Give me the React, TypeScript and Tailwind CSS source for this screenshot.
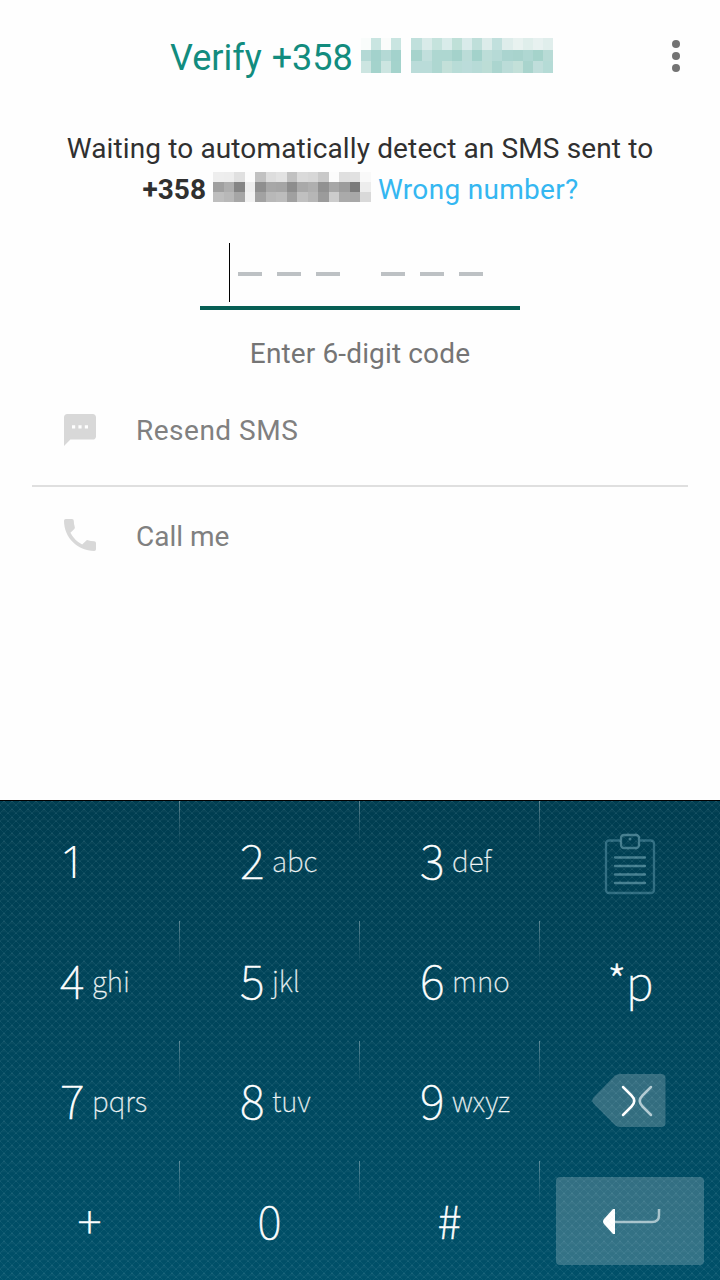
import type { ReactNode } from "react";

const titleMask = [
  ["#f9fcfb", "#c9e5e1", "#fafcfb", "#c9e5e1", "", "#c0e0dc", "#d9ebe9", "#c5e3dd", "#d9ecea", "#bfe0d8", "#d9ebea", "#bfdfda", "#dcecea", "#c1e0dd", "#deedeb", "#e8f2f0", "#dfeeeb", "#e7f1f0", "#e0eeec"],
  ["#b4d9d5", "#a3d2cc", "#b4d9d5", "#a3d2cc", "", "#a6d3cc", "#c1dfdc", "#aed7d1", "#aed7d1", "#a4d2cb", "#bbdcd8", "#a3d2cb", "#bcddd8", "#b6dad6", "#aad4cf", "#a8d3cd", "#afd7d2", "#a5d3cb", "#b8dbd6"],
  ["#cce5e1", "#a4d3cc", "#cce5e1", "#a4d3cc", "", "#badcd9", "#badcd9", "#aed7d1", "#c3e0d9", "#b8dcd7", "#bbdcda", "#b7dbd7", "#bcddd6", "#abd5cf", "#bbdcd8", "#c3e0d9", "#a9d4cd", "#c0dedb", "#b5dbd6"],
];

const phoneMask = [
  ["#eeeeee", "#ededed", "#e0e0e0", "#fcfcfc", "#c1c1c1", "#dddddd", "#e2e2e2", "#c1c1c1", "#dadada", "#d7d7d7", "#c9c9c9", "#fcfcfc", "#dfdfdf", "#e1e1e1", "#f9f9f9"],
  ["#a0a0a0", "#aeaeae", "#858585", "#eeeeee", "#8f8f8f", "#a7a7a7", "#a5a5a5", "#8d8d8d", "#a9a9a9", "#afafaf", "#919191", "#a7a7a7", "#9c9c9c", "#7b7b7b", "#ededed"],
  ["#bebebe", "#b8b8b8", "#a6a6a6", "#f2f2f2", "#a2a2a2", "#b8b8b8", "#bcbcbc", "#a0a0a0", "#c0c0c0", "#b6b6b6", "#9b9b9b", "#cccccc", "#aaaaaa", "#a8a8a8", "#d9d9d9"],
];

const keys = [
  ["1", ""],
  ["2", "abc"],
  ["3", "def"],
  ["clipboard", ""],
  ["4", "ghi"],
  ["5", "jkl"],
  ["6", "mno"],
  ["star", ""],
  ["7", "pqrs"],
  ["8", "tuv"],
  ["9", "wxyz"],
  ["backspace", ""],
  ["+", ""],
  ["0", ""],
  ["#", ""],
  ["enter", ""],
];

function Mask({ rows, className, gapWidth }: { rows: string[][]; className: string; gapWidth?: string }) {
  return (
    <div className={`flex shrink-0 flex-col ${className}`}>
      {rows.map((row, i) => (
        <div key={i} className="flex flex-1">
          {row.map((color, j) =>
            color ? (
              <span key={j} className="flex-1" style={{ backgroundColor: color }} />
            ) : (
              <span key={j} className={gapWidth} />
            )
          )}
        </div>
      ))}
    </div>
  );
}

function ClipboardIcon() {
  return (
    <svg width="52" height="62" viewBox="0 0 52 62" fill="none" stroke="#2f6c80" strokeWidth="2.300">
      <path d="M16 7.500H5a3 3 0 0 0-3 3V57a3 3 0 0 0 3 3h42a3 3 0 0 0 3-3V10.500a3 3 0 0 0-3-3H36" />
      <rect x="17" y="2" width="18" height="13" rx="3" stroke="#437c8d" />
      <circle cx="26" cy="6" r="1.500" fill="#427b8c" stroke="none" />
      <path d="M11 24.500h30M11 33h30M11 41.500h30M11 50h30" stroke="#447e8f" strokeLinecap="round" />
    </svg>
  );
}

function BackspaceIcon() {
  return (
    <svg width="74" height="53" viewBox="0 0 74 53" fill="none">
      <path
        d="M23 1.500Q25 0 28 0H69Q73.500 0 73.500 4V49Q73.500 53 69 53H28Q25 53 23 51L1.500 29.500Q-1 26.500 1.500 23.500Z"
        fill="#fff"
        fillOpacity=".2"
      />
      <path d="M31 13L39.500 21.500Q45 27 39.500 32.500L31 41" stroke="#fff" strokeWidth="2.500" strokeLinecap="round" />
      <path d="M59 13L50.500 21.500Q45 27 50.500 32.500L59 41" stroke="#b3cbd3" strokeWidth="2.500" strokeLinecap="round" />
    </svg>
  );
}

function EnterIcon() {
  return (
    <svg width="58" height="26" viewBox="0 0 58 26" fill="none">
      <path d="M12 14H49Q56 14 56 7V1" stroke="#a9c4cc" strokeWidth="2.500" />
      <path d="M12 1V26H10L1 16Q-1 13.500 1 11L10 1Z" fill="#fff" />
    </svg>
  );
}

function Key({ name, letters, last }: { name: string; letters: string; last: boolean }) {
  let content: ReactNode;
  if (name === "clipboard") {
    content = (
      <div className="flex w-full justify-center pt-[7px]">
        <ClipboardIcon />
      </div>
    );
  } else if (name === "star") {
    content = (
      <div className="flex w-full items-center pb-px pl-[67px] text-[46px] leading-none [-webkit-text-stroke:0.5px_white]">
        <span className="w-[19px]">*</span>
        <span>p</span>
      </div>
    );
  } else if (name === "backspace") {
    content = (
      <div className="pl-[52px]">
        <BackspaceIcon />
      </div>
    );
  } else if (name === "enter") {
    content = (
      <div className="mt-[2px] ml-4 flex h-[88px] w-[148px] shrink-0 items-center justify-center rounded bg-white/20 pl-1">
        <EnterIcon />
      </div>
    );
  } else if (name === "1") {
    content = <span className="pl-[60px] font-['Open_Sans',sans-serif] text-[45px] leading-none font-light">1</span>;
  } else if ("+0#".includes(name)) {
    content = (
      <span className="w-full pb-[3px] text-center text-[46px] leading-none [-webkit-text-stroke:0.5px_white]">{name}</span>
    );
  } else {
    content = (
      <div className="flex items-center pt-px pl-[60px] leading-none">
        <span className="w-8 pb-[5px] text-[47px] [-webkit-text-stroke:0.5px_white]">{name}</span>
        <span className="pb-px text-[28px] text-white/90 [-webkit-text-stroke:0.3px]">{letters}</span>
      </div>
    );
  }
  return (
    <div className="flex">
      <div className="flex w-[179px] items-center">{content}</div>
      {!last && <div className="mt-px h-11 w-px bg-linear-to-b from-white/35 via-white/15 to-transparent" />}
    </div>
  );
}

function Keypad() {
  return (
    <div className="grid h-[480px] grid-cols-4 grid-rows-[120px_120px_120px_120px] bg-linear-to-b from-[#003d50] to-[#005069] font-['Noto_Sans_CJK_SC',sans-serif] font-thin text-white shadow-[inset_0_1px_0_#000]">
      <svg className="pointer-events-none absolute h-[479px] w-[720px] translate-y-px">
        <defs>
          <pattern id="weave" width="8" height="8" patternUnits="userSpaceOnUse">
            <path d="M0 4L4 0L8 4L4 3Z" fill="#fff" fillOpacity=".03" />
            <path d="M0 4L4 0L8 4M0 4L4 8L8 4" fill="none" stroke="#9fdcea" strokeOpacity=".065" />
            <path d="M3.500 0h1v1h-1zM0 4h.5v1H0zM7.500 4H8v1h-.5z" fill="#fff" fillOpacity=".1" />
          </pattern>
        </defs>
        <rect width="720" height="479" fill="url(#weave)" />
      </svg>
      {keys.map(([name, letters], i) => (
        <Key key={name} name={name} letters={letters} last={i % 4 === 3} />
      ))}
    </div>
  );
}

export default function App() {
  return (
    <div className="flex h-[1280px] w-[720px] flex-col overflow-hidden bg-[#fefefe] font-[Roboto,sans-serif]">
      <header className="flex h-28 items-center pr-10 pl-[170px]">
        <h1 className="w-[191px] pt-1 text-[36px] leading-none whitespace-nowrap text-[#128c7e] [word-spacing:1px]">
          Verify +358
        </h1>
        <Mask rows={titleMask} className="-mt-px h-[35px] w-[192px]" gapWidth="w-[10px]" />
        <button type="button" aria-label="More options" className="ml-auto flex flex-col gap-1">
          <span className="size-2 rounded-full bg-[#737373]" />
          <span className="size-2 rounded-full bg-[#737373]" />
          <span className="size-2 rounded-full bg-[#737373]" />
        </button>
      </header>

      <main className="flex h-[688px] flex-col">
        <p className="mt-4 text-center text-[28px] leading-[41px] tracking-[0.13px] whitespace-nowrap text-[#303030]">
          Waiting to automatically detect an SMS sent to
        </p>
        <div className="flex h-[41px] items-center pl-[142.5px] text-[28px] leading-none">
          <span className="w-[70.5px] font-bold text-[#303030]">+358</span>
          <Mask rows={phoneMask} className="-mt-[5px] h-[30px] w-[158px]" />
          <a className="ml-[7px] tracking-[0.3px] whitespace-nowrap text-[#34b7f1]">Wrong number?</a>
        </div>

        <div className="mx-auto mt-[33px] flex h-[67px] w-80 border-b-4 border-[#075e54] pl-[29px]">
          <span className="h-[59px] w-px bg-black" />
          <div className="mt-[29px] ml-2 flex gap-[15px]">
            <span className="h-1 w-6 bg-[#bdc1c4]" />
            <span className="h-1 w-6 bg-[#bdc1c4]" />
            <span className="mr-[26px] h-1 w-6 bg-[#bdc1c4]" />
            <span className="h-1 w-6 bg-[#bdc1c4]" />
            <span className="h-1 w-6 bg-[#bdc1c4]" />
            <span className="h-1 w-6 bg-[#bdc1c4]" />
          </div>
        </div>
        <p className="mt-[29px] text-center text-[28px] leading-[30px] tracking-[0.14px] text-[#757575]">Enter 6-digit code</p>

        <div className="mx-8 mt-[5px] flex h-[113px] items-center gap-10 border-b-2 border-[#dfdfdf] pl-8">
          <svg width="32" height="32" viewBox="2 2 20 20" fill="#d8d8d8">
            <path d="M20 2H4c-1.100 0-2 .9-2 2v18l4-4h14c1.100 0 2-.9 2-2V4c0-1.100-.9-2-2-2zM9 11H7V9h2v2zm4 0h-2V9h2v2zm4 0h-2V9h2v2z" />
          </svg>
          <span className="pt-[2px] text-[28px] leading-none tracking-[0.5px] text-[#808080]">Resend SMS</span>
        </div>
        <div className="mx-8 flex h-24 items-center gap-10 pl-8">
          <svg width="32" height="32" viewBox="3 3 18 18" fill="#d8d8d8">
            <path d="M20 21a1 1 0 0 0 1-1v-3.500a1 1 0 0 0-1-1c-1.250 0-2.450-.2-3.570-.57a1 1 0 0 0-1.020.24l-2.200 2.200A15.100 15.100 0 0 1 6.620 10.790l2.200-2.200a1 1 0 0 0 .25-1.020A11.400 11.400 0 0 1 8.500 4a1 1 0 0 0-1-1H4a1 1 0 0 0-1 1c0 9.390 7.610 17 17 17z" />
          </svg>
          <span className="pt-1 text-[28px] leading-none text-[#808080]">Call me</span>
        </div>
      </main>
      <Keypad />
    </div>
  );
}
